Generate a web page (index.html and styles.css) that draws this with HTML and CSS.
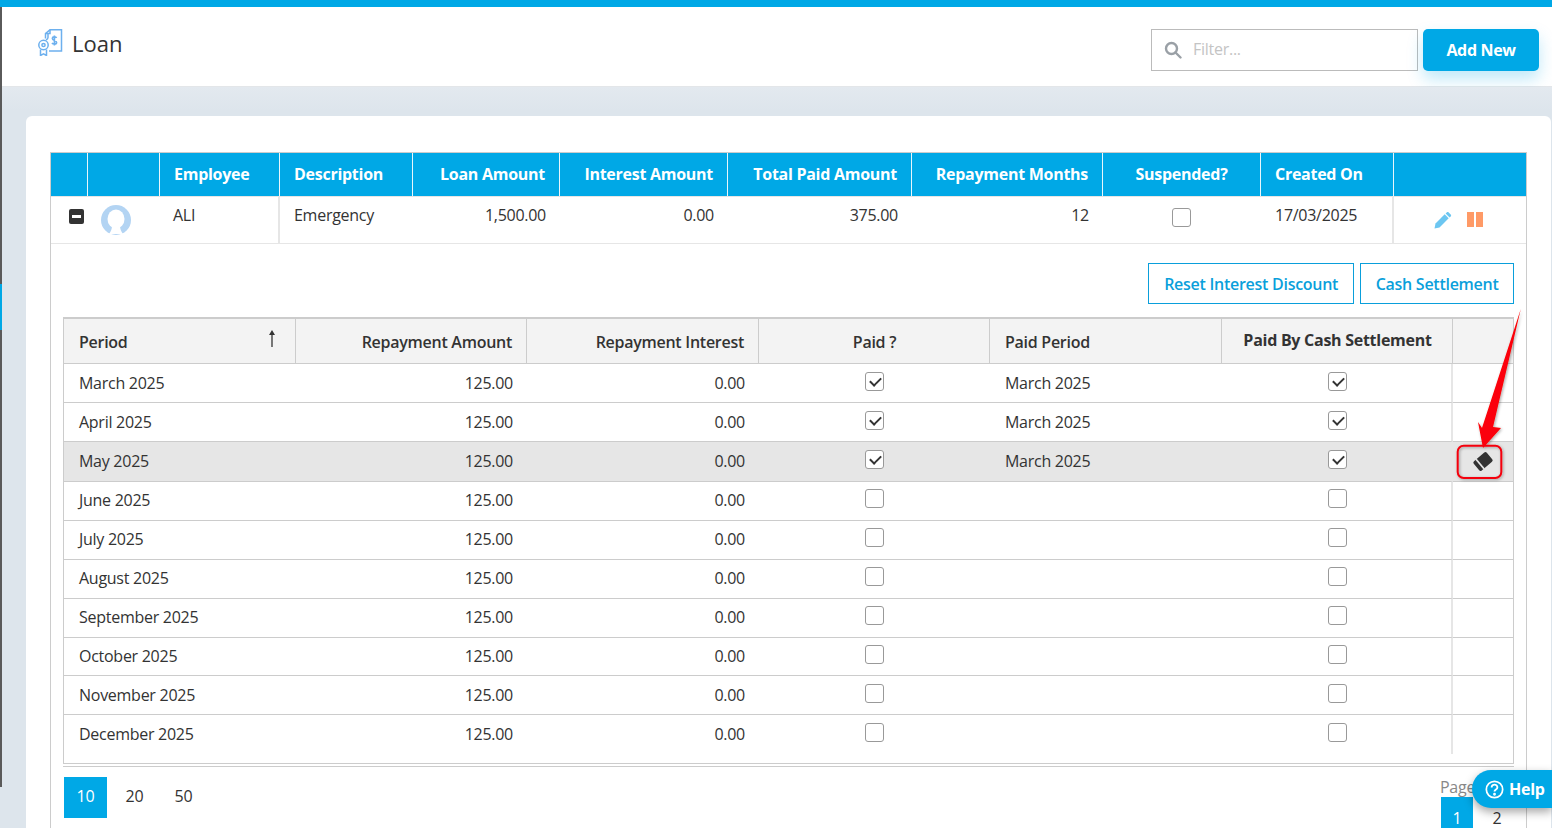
FILE: index.html
```html
<!DOCTYPE html>
<html lang="en">
<head>
<meta charset="utf-8">
<title>Loan</title>
<link rel="stylesheet" href="styles.css">
</head>
<body>
<div class="topbar"></div>
<div class="shell">
  <div class="rail"><div class="rail-dark"></div><div class="rail-blue"></div><div class="rail-dark rail-grow"></div></div>
  <div class="main">
    <header class="header">
      <div class="title">
        <svg class="title-icon" viewBox="0 0 25 27" fill="none" stroke="#6db0ee" stroke-width="1.500">
          <path d="M7.500 9.500V4.500L12 .8h11.500V22H11"/>
          <path d="M7.500 4.500H12V.8"/>
          <path d="M10 5v3.500c0 1.500-1 2-2 2.500"/>
          <path d="M18.500 9c-.5-1.500-4-1.700-4.200.4-.1 2.700 4.300 1.400 4.300 4.100 0 2-3.700 1.900-4.600.5M16.400 6.500v10" stroke-width="1.600"/>
          <circle cx="5.500" cy="16" r="4.700"/>
          <circle cx="5.500" cy="16" r="1.600"/>
          <path d="M2.500 20.500v6l3-1.700 3 1.700v-6"/>
        </svg>
        <h1 class="title-text">Loan</h1>
      </div>
      <div class="tools">
        <label class="filter">
          <svg class="search" viewBox="0 0 18 18" fill="none" stroke="#9aa0a6" stroke-width="2.400"><circle cx="7.500" cy="7.500" r="5.500"/><path d="M11.500 11.500L16.500 16.500" stroke-linecap="round"/></svg>
          <span class="placeholder">Filter...</span>
        </label>
        <button class="add-btn">Add New</button>
      </div>
    </header>
    <div class="content">
      <section class="card">
        <table class="grid">
          <colgroup>
            <col class="g1"><col class="g2"><col class="g3"><col class="g4"><col class="g5"><col class="g6"><col class="g7"><col class="g8"><col class="g9"><col class="g10"><col class="g11">
          </colgroup>
          <thead>
            <tr>
              <th></th><th></th><th>Employee</th><th>Description</th><th class="r">Loan Amount</th><th class="r">Interest Amount</th><th class="r">Total Paid Amount</th><th class="r">Repayment Months</th><th class="c">Suspended?</th><th>Created On</th><th></th>
            </tr>
          </thead>
          <tbody>
            <tr>
              <td class="collapse-cell"><span class="minus"></span></td>
              <td class="avatar-cell">
                <svg class="avatar" viewBox="0 0 30 30"><circle cx="15" cy="15" r="15" fill="#b3d4f3"/><ellipse cx="15" cy="14" rx="8.500" ry="9.500" fill="#fff"/><path d="M11 21c0 3-1 5-3 8h14c-2-3-3-5-3-8z" fill="#fff"/></svg>
              </td>
              <td class="sep-r name-cell">ALI</td>
              <td>Emergency</td>
              <td class="r">1,500.00</td>
              <td class="r">0.00</td>
              <td class="r">375.00</td>
              <td class="r">12</td>
              <td class="c"><span class="check check-lite"></span></td>
              <td class="sep-r">17/03/2025</td>
              <td class="actions">
                <svg class="pencil" viewBox="0 0 18 18"><path d="M.5 17.500l1-5L10.700 3.300l4 4L5.500 16.500z" fill="#6cc6f1"/><path d="M12.700 1.500c.6-.6 1.400-.6 2 0l2 2c.6.600.6 1.400 0 2l-1.100 1.100-4-4z" fill="#6cc6f1"/></svg>
                <span class="pause"><i></i><i></i></span>
              </td>
            </tr>
          </tbody>
        </table>
        <div class="detail">
          <div class="detail-actions">
            <button class="outline">Reset Interest Discount</button>
            <button class="outline">Cash Settlement</button>
          </div>
          <div class="sub-wrap">
            <table class="sub">
              <colgroup>
                <col class="s1"><col class="s2"><col class="s3"><col class="s4"><col class="s5"><col class="s6"><col class="s7">
              </colgroup>
              <thead>
                <tr>
                  <th><span class="sort-head">Period<svg class="sort" viewBox="0 0 8 18"><path d="M4 17V3" stroke="#333" stroke-width="1.300"/><path d="M4 0L7 5H1z" fill="#333"/></svg></span></th>
                  <th class="r">Repayment Amount</th>
                  <th class="r">Repayment Interest</th>
                  <th class="c">Paid ?</th>
                  <th>Paid Period</th>
                  <th class="c cash-head">Paid By Cash Settlement</th>
                  <th></th>
                </tr>
              </thead>
              <tbody>
                <tr><td>March 2025</td><td class="r">125.00</td><td class="r">0.00</td><td class="c"><span class="check on"></span></td><td>March 2025</td><td class="c"><span class="check on"></span></td><td></td></tr>
                <tr><td>April 2025</td><td class="r">125.00</td><td class="r">0.00</td><td class="c"><span class="check on"></span></td><td>March 2025</td><td class="c"><span class="check on"></span></td><td></td></tr>
                <tr class="selected"><td>May 2025</td><td class="r">125.00</td><td class="r">0.00</td><td class="c"><span class="check on"></span></td><td>March 2025</td><td class="c"><span class="check on"></span></td><td class="erase-cell">
                  <svg class="eraser" viewBox="-11 -10.500 22 21"><g transform="rotate(-40)"><rect x="-8.500" y="-6" width="17" height="12" rx="1.800" fill="#333"/><rect x="-4.800" y="-6.500" width="1.800" height="13" fill="#e6e6e6"/></g></svg>
                </td></tr>
                <tr><td>June 2025</td><td class="r">125.00</td><td class="r">0.00</td><td class="c"><span class="check"></span></td><td></td><td class="c"><span class="check"></span></td><td></td></tr>
                <tr><td>July 2025</td><td class="r">125.00</td><td class="r">0.00</td><td class="c"><span class="check"></span></td><td></td><td class="c"><span class="check"></span></td><td></td></tr>
                <tr><td>August 2025</td><td class="r">125.00</td><td class="r">0.00</td><td class="c"><span class="check"></span></td><td></td><td class="c"><span class="check"></span></td><td></td></tr>
                <tr><td>September 2025</td><td class="r">125.00</td><td class="r">0.00</td><td class="c"><span class="check"></span></td><td></td><td class="c"><span class="check"></span></td><td></td></tr>
                <tr class="short"><td>October 2025</td><td class="r">125.00</td><td class="r">0.00</td><td class="c"><span class="check"></span></td><td></td><td class="c"><span class="check"></span></td><td></td></tr>
                <tr><td>November 2025</td><td class="r">125.00</td><td class="r">0.00</td><td class="c"><span class="check"></span></td><td></td><td class="c"><span class="check"></span></td><td></td></tr>
                <tr class="last"><td>December 2025</td><td class="r">125.00</td><td class="r">0.00</td><td class="c"><span class="check"></span></td><td></td><td class="c"><span class="check"></span></td><td></td></tr>
              </tbody>
            </table>
          </div>
          <div class="pager">
            <div class="sizes"><span class="size active">10</span><span class="size">20</span><span class="size">50</span></div>
            <div class="pages">
              <div class="page-label">Page</div>
              <div class="page-nums"><span class="num active">1</span><span class="num">2</span></div>
            </div>
          </div>
        </div>
      </section>
    </div>
  </div>
</div>
<svg class="annotation" viewBox="0 0 75 180" fill="none">
  <defs><filter id="sh" x="-30%" y="-10%" width="160%" height="120%"><feDropShadow dx="1" dy="1" stdDeviation="1.500" flood-color="#000" flood-opacity=".35"/></filter></defs>
  <g filter="url(#sh)">
    <path d="M71.800 1L44 119l8 1L34 140l-5-26 4 6z" fill="#fb0007"/>
    <rect x="8.700" y="137.700" width="43.600" height="32.300" rx="6" stroke="#f4000a" stroke-width="2"/>
  </g>
</svg>
<button class="help"><svg class="help-icon" viewBox="0 0 20 20" fill="none" stroke="#fff" stroke-width="1.800"><circle cx="10" cy="10" r="8.600"/><path d="M7 7.800c0-4 6.200-3.800 6 0 0 2.300-3 2.100-3 4.400" stroke-width="2"/><circle cx="10" cy="15" r=".6" fill="#fff"/></svg>Help</button>
</body>
</html>
```
FILE: styles.css
```css
* { box-sizing: border-box; }
html, body { margin: 0; height: 828px; overflow: hidden; }
body { font-family: "Open Sans", "Noto Sans", sans-serif; font-size: 16px; letter-spacing: -.27px; color: #333; background: #dde5ec; display: flex; flex-direction: column; }
.topbar { height: 7px; background: #00a8e6; flex: none; }
.shell { display: flex; flex: 1; min-height: 0; }
.rail { width: 2px; flex: none; display: flex; flex-direction: column; height: 780px; }
.rail-dark { height: 277px; background: #5a5a5a; }
.rail-blue { height: 46px; background: #00a8e6; }
.rail-grow { flex: 1; }
.main { flex: 1; min-width: 0; display: flex; flex-direction: column; }
.header { height: 80px; flex: none; background: #fff; border-bottom: 1px solid #e3e6e9; display: flex; justify-content: space-between; padding: 22px 13px 0 36px; }
.title { display: flex; align-items: flex-start; gap: 9px; }
.title-icon { width: 25px; height: 27px; }
.title-text { margin: 0; font-size: 22px; font-weight: 400; line-height: 28px; letter-spacing: 0; }
.tools { display: flex; gap: 5px; align-items: flex-start; }
.filter { width: 267px; height: 42px; border: 1px solid #bbb; display: flex; align-items: center; padding: 0 0 2px 12px; gap: 11px; background: #fff; }
.search { width: 18px; height: 18px; margin-top: 2px; }
.placeholder { color: #c4c4c4; font-size: 16px; }
.add-btn { width: 116px; height: 42px; border: 0; border-radius: 5px; background: #00a8e6; color: #fff; font: 700 16px "Open Sans", sans-serif; letter-spacing: -.35px; box-shadow: 0 8px 16px rgba(0, 168, 230, .25); }
.content { flex: 1; padding: 29px 0 0 24px; min-height: 0; overflow: hidden; background: linear-gradient(#e3e9ef, #dde5ec 24px); }
.card { background: #fff; border-radius: 6px 6px 0 0; margin-right: 1px; padding: 36px 24px 0; height: 800px; }
table { border-collapse: separate; border-spacing: 0; table-layout: fixed; }
.grid { width: 1477px; border: 1px solid #ccc; border-width: 1px 1px 0 1px; }
.g1 { width: 37px; } .g2 { width: 72px; } .g3 { width: 120px; } .g4 { width: 133px; } .g5 { width: 147px; } .g6 { width: 168px; } .g7 { width: 184px; } .g8 { width: 191px; } .g9 { width: 158px; } .g10 { width: 133px; } .g11 { width: 132px; }
.grid th { height: 43px; background: #00a8e6; color: #fff; font-weight: 700; font-size: 16px; text-align: left; padding: 0 14px 2px; border-right: 1px solid #e8f6fc; white-space: nowrap; }
.grid th:last-child { border-right: 0; }
.grid td { height: 48px; padding: 0 14px 10px; border-bottom: 1px solid #e6e6e6; border-top: 1px solid #e6e6e6; font-size: 16px; white-space: nowrap; }
.grid td.name-cell { padding-left: 13px; }
.grid .sep-r { border-right: 2px solid #e6e6e6; }
.grid .r { text-align: right; }
.grid .c { text-align: center; }
.grid td.collapse-cell, .grid td.avatar-cell { padding: 0; }
.collapse-cell { text-align: right; }
.minus { display: inline-block; position: relative; width: 15px; height: 15px; border-radius: 2px; background: #333; margin: 0 4px 8px 0; vertical-align: middle; }
.minus::after { content: ""; position: absolute; left: 3px; right: 3px; top: 6px; height: 3px; background: #fff; }
.avatar { display: block; width: 30px; height: 30px; margin: 0 0 0 13px; }
.grid td.actions { padding: 0 0 4px 40px; }
.grid td.actions > * { vertical-align: middle; }
.pencil { width: 18px; height: 18px; display: inline-block; }
.pause { display: inline-flex; gap: 2px; margin-left: 11px; }
.pause i { width: 7px; height: 15px; background: #ff9a66; display: block; }
.check { display: inline-block; position: relative; width: 19px; height: 19px; border: 1px solid #999; border-radius: 3px; background: #fff; vertical-align: middle; }
.check-lite { margin: 2px 2px 0 0; }
.check.on::after { content: ""; position: absolute; left: 4px; top: 4px; width: 9px; height: 5px; border-left: 2px solid #333; border-bottom: 2px solid #333; transform: rotate(-45deg); }
.detail { width: 1477px; height: 700px; border-left: 1px solid #ccc; border-right: 1px solid #ccc; padding: 19px 12px 0; }
.detail-actions { display: flex; justify-content: flex-end; gap: 6px; margin-bottom: 13px; }
.outline { height: 41px; padding: 0 15px; background: #fff; border: 1px solid #0a9fdb; color: #0a9fdb; font: 600 16px "Open Sans", sans-serif; letter-spacing: -.27px; }
.outline:last-child { padding: 0 14.500px; }
.sub-wrap { width: 1451px; height: 447px; border: 1px solid #ccc; border-top-width: 2px; box-shadow: 0 2px 0 #fff, 0 3px 0 #ccc; }
.sub { width: 1449px; }
.s1 { width: 232px; } .s2 { width: 231px; } .s3 { width: 232px; } .s4 { width: 231px; } .s5 { width: 232px; } .s6 { width: 231px; } .s7 { width: 60px; }
.sub th { height: 45px; background: #f3f3f3; font-weight: 600; font-size: 16px; text-align: left; padding: 2px 14px 0 15px; border-right: 1px solid #ccc; border-bottom: 1px solid #ccc; white-space: nowrap; }
.sub th:last-child { border-right: 0; }
.sub td { height: 39px; padding: 0 14px 0 15px; border-bottom: 1px solid #ccc; font-size: 16px; white-space: nowrap; }
.sub td:nth-child(6) { border-right: 2px solid #e6e6e6; padding-left: 15px; }
.sub td:nth-child(4) { padding-left: 13px; }
.sub tbody tr:nth-child(n+3):nth-child(-n+8) td { padding-bottom: 2px; }
.sub .r { text-align: right; }
.sub .c { text-align: center; }
.sub .check { margin-top: -6px; }
.sub .selected td { background: #e6e6e6; height: 40px; }
.sub .short td { height: 38px; }
.sub .last td { border-bottom: 0; padding-bottom: 2px; }
.sort-head { display: flex; justify-content: space-between; align-items: flex-start; }
.sort { width: 8px; height: 18px; margin-right: 5px; margin-top: -1px; }
.sub th.cash-head { font-weight: 700; padding: 0 14px 2px 15px; }
.sub td.erase-cell { padding: 0 0 2px; text-align: center; }
.eraser { width: 22px; height: 21px; vertical-align: middle; }
.pager { display: flex; justify-content: space-between; margin-top: 13px; width: 1451px; }
.sizes { display: flex; gap: 6px; align-items: flex-start; margin-left: 1px; }
.size { width: 43px; height: 41px; display: flex; align-items: center; justify-content: center; padding-bottom: 4px; }
.size.active { background: #00a8e6; color: #fff; }
.pages { width: 74px; }
.page-label { color: #888; line-height: 20px; }
.page-nums { display: flex; gap: 8px; margin-left: 1px; }
.num { width: 32px; height: 41px; display: flex; align-items: center; justify-content: center; }
.num.active { background: #00a8e6; color: #fff; }
.annotation { position: absolute; left: 1449px; top: 308px; width: 75px; height: 180px; }
.help { position: absolute; left: 1472px; top: 770px; width: 80px; height: 38px; border: 0; border-radius: 19px 0 0 19px; background: #00a8e6; color: #fff; font: 700 16px "Open Sans", sans-serif; letter-spacing: -.27px; display: flex; align-items: center; gap: 5px; padding: 0 0 0 13px; box-shadow: 0 4px 10px rgba(0, 0, 0, .35); }
.help-icon { width: 19px; height: 19px; flex: none; }
```
